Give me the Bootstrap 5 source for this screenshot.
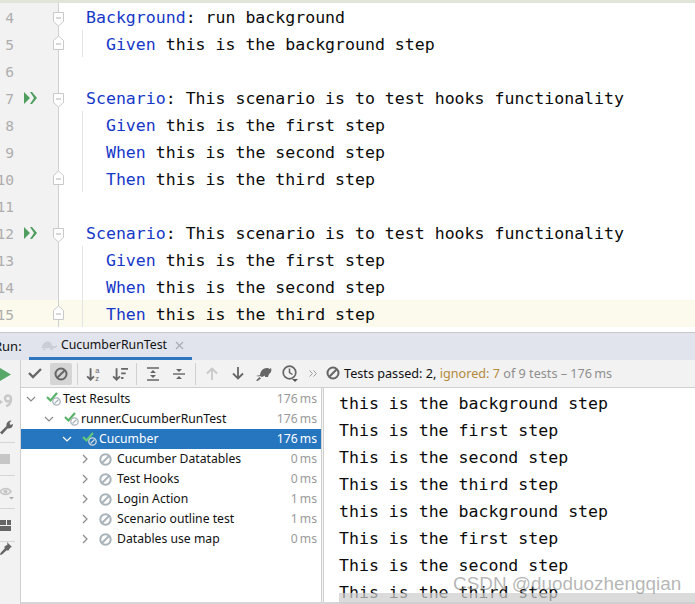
<!DOCTYPE html>
<html lang="en">
<head>
<meta charset="utf-8">
<title>CucumberRunTest</title>
<link href="https://cdn.jsdelivr.net/npm/bootstrap@5.3.0/dist/css/bootstrap.min.css" rel="stylesheet">
<style>
html,body{margin:0;height:604px;overflow:hidden;background:#fff}
.ide{width:695px;height:604px;position:relative;overflow:hidden;font-family:"Noto Sans",sans-serif;font-size:12.2px;color:#111}
.topstrip{height:3px;background:#dfe5d8}
.ed-row{height:27px;display:flex}
.ed-row.cur{background:#fcfaed}
.gut{width:59px;flex:none;display:flex;align-items:center;background:#f2f2f2;border-right:1px solid #d0d0d0;position:relative}
.cur .gut{background:#fcfaed}
.lnum{width:14px;flex:none;display:flex;justify-content:flex-end;font:14.6px/29px "DejaVu Sans Mono",monospace;height:27px;color:#aeaeae}
.runi{margin-left:10px;width:14px;height:12px;flex:none}
.foldi{position:absolute;left:53px;top:9px;width:11px;height:15px}
.foldi.up{top:5px}
.code{font:16.56px/29px "DejaVu Sans Mono",monospace;height:27px;white-space:pre;color:#0a0a0a;padding-left:27px}
.code.ind{margin-left:23px;padding-left:3px;border-left:1px solid #e4e4e4}
.kw{color:#1538c8}
.gap5{height:5px}
.tabbar{height:28px;background:#e1e4ec;border-top:1px solid #c9c9c9;display:flex}
.runlbl{width:29px;line-height:27px;text-indent:-6px;overflow:hidden;font-size:13px;flex:none}
.runtab{width:163px;border-bottom:3px solid #2e77c0;display:flex;align-items:center;padding-left:12px;gap:4px;font-size:12.3px}
.tool-row{flex:1;display:flex;min-height:0}
.strip{width:21px;flex:none;background:#f2f2f2;border-right:1px solid #d0d0d0;position:relative}
.strip svg{display:block;margin-bottom:0}
.sico{height:33px;display:flex;align-items:center;justify-content:flex-start;border-bottom:1px solid #d6d6d6;width:15px}
.sico.nb{border-bottom:0}
.sico.s1{height:28px}.sico.s2{height:24px;margin-left:-1px}.sico.s3{height:31px}
.sico.s7{align-items:flex-start}
.mainc{flex:1;display:flex;flex-direction:column;min-width:0}
.tbar{height:28px;background:#f2f2f2;border-bottom:1px solid #d0d0d0;display:flex;align-items:center;padding-left:1px;flex:none}
.tb{width:26px;height:22px;display:flex;align-items:center;justify-content:center;flex:none;border-radius:2px}
.tb.on{background:#d5d5d5;width:22px;margin:0 2px}
.tb.more{width:20px}
.tsep{width:1px;height:22px;background:#d0d0d0;margin:0 3px 0 3px;flex:none}
.status{font-size:12.65px;display:flex;align-items:center;gap:4px;margin-left:3px;white-space:nowrap}
.ign{color:#b38a3c}.dim{color:#8f8f8f}
.panes{flex:1;display:flex;min-height:0;border-bottom:2px solid #d6d6d6}
.tree{width:300px;flex:none;padding-top:1px}
.tr{height:20px;display:flex;align-items:center;padding-right:4px;white-space:nowrap}
.tr.sel{background:#2675bf;color:#fff}
.tr .tm{margin-left:auto;color:#9a9a9a;font-size:12.2px}
.tr.sel .tm{color:#fff}
.chev{width:10px;height:10px;flex:none;margin-right:10px}
.l0{padding-left:5px}.l1{padding-left:23px}.l2{padding-left:41px}.l3{padding-left:59px}
.sti{width:15px;height:14px;flex:none;margin-right:2px}
.bani{width:13px;height:13px;flex:none;margin-right:5px;margin-left:-1px}
.split{width:3px;flex:none;background:#f4f4f4;border-left:1px solid #d0d0d0;border-right:1px solid #d0d0d0}
.cons{flex:1;padding:2px 0 0 15px;position:relative;overflow:hidden}
.cline{font:16.56px/27px "DejaVu Sans Mono",monospace;white-space:pre;color:#0a0a0a}
.hscroll{position:absolute;left:339px;right:0;top:593px;height:11px;background:rgba(205,205,205,.72)}
.wmark{position:absolute;left:453px;top:572px;font-family:"Liberation Sans",sans-serif;font-size:18.9px;line-height:24px;color:rgba(120,120,120,.55);white-space:nowrap}
</style>
</head>
<body>
<svg width="0" height="0" style="position:absolute">
<defs>
<symbol id="run2" viewBox="0 0 14 12"><path fill="#4f9e5f" d="M0 0l6 6-6 6zM6 0h2l5 6-5 6H6l4-6z"/></symbol>
<symbol id="fs" viewBox="0 0 11 15"><path fill="#fff" stroke="#c9c9c9" d="M.5.5h10v9l-5 4.5-5-4.5z"/><path stroke="#b0b0b0" d="M3 6h5"/></symbol>
<symbol id="fe" viewBox="0 0 11 15"><path fill="#fff" stroke="#c9c9c9" d="M.5 14.5h10v-9l-5-4.5-5 4.5z"/><path stroke="#b0b0b0" d="M3 9h5"/></symbol>
<symbol id="chd" viewBox="0 0 10 10"><path fill="none" stroke="#8a8a8a" stroke-width="1.2" d="M1 3l4 4 4-4"/></symbol>
<symbol id="chdw" viewBox="0 0 10 10"><path fill="none" stroke="#fff" stroke-width="1.2" d="M1 3l4 4 4-4"/></symbol>
<symbol id="chr" viewBox="0 0 10 10"><path fill="none" stroke="#8a8a8a" stroke-width="1.2" d="M3 1l4 4-4 4"/></symbol>
<symbol id="ban" viewBox="0 0 13 13"><circle cx="6.5" cy="6.5" r="5.2" fill="none" stroke="#a9b3ba" stroke-width="2"/><path stroke="#a9b3ba" stroke-width="2" d="M3 10l7-7"/></symbol>
<symbol id="st" viewBox="0 0 15 14"><path fill="none" stroke="#58b368" stroke-width="2.2" d="M1 5l3.5 3.5L11 1"/><circle cx="10.5" cy="9.5" r="3.7" fill="#fff" stroke="#a9b3ba" stroke-width="1.3"/><path stroke="#a9b3ba" stroke-width="1.2" d="M8.5 11.5l4-4"/></symbol>
<symbol id="stw" viewBox="0 0 15 14"><path fill="none" stroke="#64c878" stroke-width="2.2" d="M1 5l3.5 3.5L11 1"/><circle cx="10.5" cy="9.5" r="3.7" fill="#2675bf" stroke="#cfd8de" stroke-width="1.3"/><path stroke="#cfd8de" stroke-width="1.2" d="M8.5 11.5l4-4"/></symbol>
<symbol id="turtle" viewBox="0 0 24 14"><path fill="currentColor" d="M1 12c0-5 3-11 9-11 4 0 6 3 7 7h4c2 0 3-1 2-3 2 2 1 6-3 6H3z"/><path fill="currentColor" d="M3 12h4v2H3zM14 11h4v3h-4z"/></symbol>
</defs>
</svg>

<div class="ide d-flex flex-column">
  <div class="topstrip"></div>
  <div class="ed-row"><div class="gut"><div class="lnum">4</div><svg class="foldi"><use href="#fs"/></svg></div><div class="code"><span class="kw">Background</span>: run background</div></div>
  <div class="ed-row"><div class="gut"><div class="lnum">5</div><svg class="foldi up"><use href="#fe"/></svg></div><div class="code ind">  <span class="kw">Given</span> this is the background step</div></div>
  <div class="ed-row"><div class="gut"><div class="lnum">6</div></div><div class="code"></div></div>
  <div class="ed-row"><div class="gut"><div class="lnum">7</div><svg class="runi"><use href="#run2"/></svg><svg class="foldi"><use href="#fs"/></svg></div><div class="code"><span class="kw">Scenario</span>: This scenario is to test hooks functionality</div></div>
  <div class="ed-row"><div class="gut"><div class="lnum">8</div></div><div class="code ind">  <span class="kw">Given</span> this is the first step</div></div>
  <div class="ed-row"><div class="gut"><div class="lnum">9</div></div><div class="code ind">  <span class="kw">When</span> this is the second step</div></div>
  <div class="ed-row"><div class="gut"><div class="lnum">10</div><svg class="foldi up"><use href="#fe"/></svg></div><div class="code ind">  <span class="kw">Then</span> this is the third step</div></div>
  <div class="ed-row"><div class="gut"><div class="lnum">11</div></div><div class="code"></div></div>
  <div class="ed-row"><div class="gut"><div class="lnum">12</div><svg class="runi"><use href="#run2"/></svg><svg class="foldi"><use href="#fs"/></svg></div><div class="code"><span class="kw">Scenario</span>: This scenario is to test hooks functionality</div></div>
  <div class="ed-row"><div class="gut"><div class="lnum">13</div></div><div class="code ind">  <span class="kw">Given</span> this is the first step</div></div>
  <div class="ed-row"><div class="gut"><div class="lnum">14</div></div><div class="code ind">  <span class="kw">When</span> this is the second step</div></div>
  <div class="ed-row cur"><div class="gut"><div class="lnum">15</div><svg class="foldi up"><use href="#fe"/></svg></div><div class="code ind">  <span class="kw">Then</span> this is the third step</div></div>
  <div class="gap5"></div>

  <div class="tabbar">
    <div class="runlbl">Run:</div>
    <div class="runtab">
      <svg width="16" height="11" viewBox="0 0 24 14" style="color:#c8cdd6"><use href="#turtle"/></svg>
      <span>CucumberRunTest</span>
      <svg width="9" height="9" viewBox="0 0 9 9" class="ms-1"><path stroke="#a8adb5" stroke-width="1.2" d="M1 1l7 7M8 1l-7 7"/></svg>
    </div>
  </div>

  <div class="tool-row">
    <div class="strip">
      <div class="sico nb s1"><svg width="11" height="13" viewBox="0 0 11 13"><path fill="#57a868" d="M0 0l11 6.5L0 13z"/></svg></div>
      <div class="sico nb s2"><svg width="14" height="13" viewBox="0 0 14 13"><path fill="#c8c8c8" d="M0 5l4 3-4 3z"/><circle cx="9" cy="4.5" r="3" fill="none" stroke="#c8c8c8" stroke-width="2.4"/><path fill="none" stroke="#c8c8c8" stroke-width="2.4" d="M12 4.5c0 4-1.500 7-5 7.500"/></svg></div>
      <div class="sico s3"><svg width="13" height="15" viewBox="0 0 13 15"><path fill="#666" d="M0 12.500L6.500 6C6 3 8 .5 11.500 .5L9.500 3l1 2 2.500-1C13 7.500 10.500 9 7.500 8.500L2 14.500z"/></svg></div>
      <div class="sico"><svg width="10" height="10" viewBox="0 0 10 10"><path fill="#c6c6c6" d="M0 0h10v10H0z"/></svg></div>
      <div class="sico"><svg width="15" height="15" viewBox="0 0 15 15"><path fill="none" stroke="#c6c6c6" stroke-width="1.600" d="M0 6.500c3-4 8-4 11 0-3 4-8 4-11 0z"/><circle cx="5.500" cy="6.500" r="2" fill="#c6c6c6"/><path fill="#aaa" d="M9 12h5l-2.500 2.500z"/></svg></div>
      <div class="sico"><svg width="11" height="11" viewBox="0 0 11 11"><path fill="#666" d="M0 0h6v5H0zM7 0h4v5H7zM0 6h11v5H0z"/></svg></div>
      <div class="sico nb s7"><svg width="12" height="13" viewBox="0 0 12 13"><path fill="#666" d="M7 0l5 5-1.500 .5L8 9 7 8 2 12.500 0 13l.5-2L5 6 4 5l3.500-2.500z"/></svg></div>
    </div>

    <div class="mainc">
      <div class="tbar">
        <div class="tb"><svg width="14" height="11" viewBox="0 0 14 11"><path fill="none" stroke="#666" stroke-width="2.400" d="M1 5l4 4 8-8"/></svg></div>
        <div class="tb on"><svg width="14" height="14" viewBox="0 0 14 14"><circle cx="7" cy="7" r="5.500" fill="none" stroke="#666" stroke-width="2"/><path stroke="#666" stroke-width="2" d="M3 11l8-8"/></svg></div>
        <div class="tsep"></div>
        <div class="tb"><svg width="16" height="16" viewBox="0 0 14 14"><path fill="none" stroke="#666" stroke-width="1.600" d="M4 2v10M1 9l3 3 3-3"/><text x="8" y="6" font-size="6.500" font-family="Liberation Sans" fill="#666">a</text><text x="8" y="13" font-size="6.500" font-family="Liberation Sans" fill="#666">z</text></svg></div>
        <div class="tb"><svg width="16" height="16" viewBox="0 0 14 14"><path fill="none" stroke="#666" stroke-width="1.600" d="M4 2v10M1 9l3 3 3-3M8 2.500h6M8 6.500h4M8 10.500h2"/></svg></div>
        <div class="tsep"></div>
        <div class="tb"><svg width="14" height="14" viewBox="0 0 14 14"><path fill="none" stroke="#666" stroke-width="1.400" d="M1 1h12M1 13h12"/><path fill="#666" d="M7 3l3 3H4zM7 11l3-3H4z"/></svg></div>
        <div class="tb"><svg width="14" height="14" viewBox="0 0 14 14"><path fill="none" stroke="#666" stroke-width="1.400" d="M1 7h12"/><path fill="#666" d="M4 2h6L7 5zM4 12h6L7 9z"/></svg></div>
        <div class="tsep"></div>
        <div class="tb"><svg width="12" height="13" viewBox="0 0 12 13"><path fill="none" stroke="#c8c8c8" stroke-width="1.800" d="M6 13V2M1 6.500L6 1.500l5 5"/></svg></div>
        <div class="tb"><svg width="12" height="13" viewBox="0 0 12 13"><path fill="none" stroke="#666" stroke-width="1.800" d="M6 0v11M1 6.500l5 5 5-5"/></svg></div>
        <div class="tb"><svg width="16" height="14" viewBox="0 0 16 14"><path fill="#666" d="M4 9c0-5 3-8 7-8 1 0 2 .5 2.500 1l1.500-1c1 2 0 5-2 6l-1 3H9V8.500L6 10zM0 13.500l3.500-3.500 1.500 1.500-3.500 2.500zM0 9l4-1-.5 1.500z"/></svg></div>
        <div class="tb"><svg width="17" height="17" viewBox="0 0 17 17"><circle cx="7.500" cy="7.500" r="6.300" fill="none" stroke="#666" stroke-width="1.700"/><path fill="none" stroke="#666" stroke-width="1.500" d="M7.500 3.500v4l3 2"/><path fill="#555" d="M10 14h6l-3 3z"/></svg></div>
        <div class="tb more"><svg width="8" height="7" viewBox="0 0 8 7"><path fill="none" stroke="#9a9a9a" d="M.5 .5L3.500 3.500.5 6.500M4.500 .5l3 3-3 3"/></svg></div>
        <div class="status">
          <svg width="14" height="14" viewBox="0 0 14 14"><circle cx="7" cy="7" r="5.500" fill="none" stroke="#666" stroke-width="2"/><path stroke="#666" stroke-width="2" d="M3 11l8-8"/></svg>
          <span>Tests passed: 2, <span class="ign">ignored: 7</span> <span class="dim">of 9 tests – 176&#8201;ms</span></span>
        </div>
      </div>

      <div class="panes">
        <div class="tree">
          <div class="tr l0"><svg class="chev"><use href="#chd"/></svg><svg class="sti"><use href="#st"/></svg><span>Test Results</span><span class="tm">176&#8201;ms</span></div>
          <div class="tr l1"><svg class="chev"><use href="#chd"/></svg><svg class="sti"><use href="#st"/></svg><span>runner.CucumberRunTest</span><span class="tm">176&#8201;ms</span></div>
          <div class="tr l2 sel"><svg class="chev"><use href="#chdw"/></svg><svg class="sti"><use href="#stw"/></svg><span>Cucumber</span><span class="tm">176&#8201;ms</span></div>
          <div class="tr l3"><svg class="chev"><use href="#chr"/></svg><svg class="bani"><use href="#ban"/></svg><span>Cucumber Datatables</span><span class="tm">0&#8201;ms</span></div>
          <div class="tr l3"><svg class="chev"><use href="#chr"/></svg><svg class="bani"><use href="#ban"/></svg><span>Test Hooks</span><span class="tm">0&#8201;ms</span></div>
          <div class="tr l3"><svg class="chev"><use href="#chr"/></svg><svg class="bani"><use href="#ban"/></svg><span>Login Action</span><span class="tm">1&#8201;ms</span></div>
          <div class="tr l3"><svg class="chev"><use href="#chr"/></svg><svg class="bani"><use href="#ban"/></svg><span>Scenario outline test</span><span class="tm">1&#8201;ms</span></div>
          <div class="tr l3"><svg class="chev"><use href="#chr"/></svg><svg class="bani"><use href="#ban"/></svg><span>Datables use map</span><span class="tm">0&#8201;ms</span></div>
        </div>
        <div class="split"></div>
        <div class="cons">
          <div class="cline">this is the background step</div>
          <div class="cline">This is the first step</div>
          <div class="cline">This is the second step</div>
          <div class="cline">This is the third step</div>
          <div class="cline">this is the background step</div>
          <div class="cline">This is the first step</div>
          <div class="cline">This is the second step</div>
          <div class="cline">This is the third step</div>
        </div>
      </div>
    </div>
  </div>
  <div class="hscroll"></div>
  <div class="wmark">CSDN @duoduozhengqian</div>
</div>
<script src="https://cdn.jsdelivr.net/npm/bootstrap@5.3.0/dist/js/bootstrap.bundle.min.js"></script>
</body>
</html>
